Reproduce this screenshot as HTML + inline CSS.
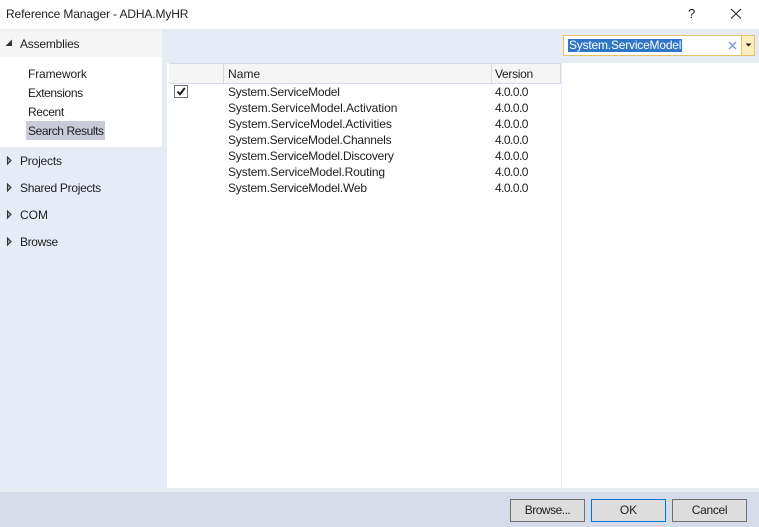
<!DOCTYPE html>
<html><head><meta charset="utf-8"><style>
html,body{margin:0;padding:0}
body{width:759px;height:527px;position:relative;overflow:hidden;background:#fff;font-family:"Liberation Sans",sans-serif;font-size:12px;color:#1e1e1e}
div,svg{position:absolute}
.t{white-space:nowrap;line-height:16px;height:16px}
.v{letter-spacing:-.55px}
.btn{background:#ddd;border:1px solid #707070;box-sizing:border-box;width:75px;height:23px;top:499px;text-align:center;line-height:21px;color:#1e1e1e}
</style></head><body>
<div style="left:0;top:29px;width:759px;height:459px;background:#e6ebf5"></div>
<div style="left:0;top:488px;width:759px;height:4px;background:#e6ebf5"></div>
<div style="left:0;top:492px;width:759px;height:35px;background:#d6dbe9"></div>
<div class="t" style="left:6px;top:6px;letter-spacing:-.13px">Reference Manager - ADHA.MyHR</div>
<svg style="left:687px;top:6px" width="10" height="14"><text x="1" y="12" font-family="Liberation Sans" font-size="13" fill="#1e1e1e">?</text></svg>
<svg style="left:730px;top:8px" width="12" height="12"><path d="M1 1L11 10.5M11 1L1 10.5" stroke="#1e1e1e" stroke-width="1" fill="none"/></svg>
<div style="left:0;top:30px;width:162px;height:27px;background:#f5f5f5"></div>
<div style="left:0;top:57px;width:162px;height:90px;background:#fff"></div>
<svg style="left:5px;top:39px" width="9" height="9"><path d="M7 .5V7H.5Z" fill="#333"/></svg>
<div class="t" style="left:20px;top:36px;letter-spacing:-.2px">Assemblies</div>
<div class="t" style="left:28px;top:66px;letter-spacing:-.14px">Framework</div>
<div class="t" style="left:28px;top:85px;letter-spacing:-.4px">Extensions</div>
<div class="t" style="left:28px;top:104px;letter-spacing:-.37px">Recent</div>
<div style="left:26px;top:121px;width:79px;height:19px;background:#c9ccd8"></div>
<div class="t" style="left:28px;top:123px;letter-spacing:-.41px">Search Results</div>
<svg style="left:6px;top:156px" width="7" height="10"><path d="M1.5 1L5 4.5L1.5 8Z" fill="#aaa" stroke="#333" stroke-width="1.1"/></svg>
<div class="t" style="left:20px;top:153px;letter-spacing:-.2px">Projects</div>
<svg style="left:6px;top:183px" width="7" height="10"><path d="M1.5 1L5 4.5L1.5 8Z" fill="#aaa" stroke="#333" stroke-width="1.1"/></svg>
<div class="t" style="left:20px;top:180px;letter-spacing:-.3px">Shared Projects</div>
<svg style="left:6px;top:210px" width="7" height="10"><path d="M1.5 1L5 4.5L1.5 8Z" fill="#aaa" stroke="#333" stroke-width="1.1"/></svg>
<div class="t" style="left:20px;top:207px;letter-spacing:0">COM</div>
<svg style="left:6px;top:237px" width="7" height="10"><path d="M1.5 1L5 4.5L1.5 8Z" fill="#aaa" stroke="#333" stroke-width="1.1"/></svg>
<div class="t" style="left:20px;top:234px;letter-spacing:-.37px">Browse</div>
<div style="left:167px;top:63px;width:592px;height:425px;background:#fff"></div>
<div style="left:561px;top:63px;width:1px;height:425px;background:#e6ebf5"></div>
<div style="left:169px;top:63px;width:392px;height:1px;background:#d6dbe9"></div>
<div style="left:169px;top:64px;width:391px;height:19px;background:#f5f5f5"></div>
<div style="left:169px;top:83px;width:392px;height:1px;background:#d6dbe9"></div>
<div style="left:223px;top:64px;width:1px;height:19px;background:#d6dbe9"></div>
<div style="left:491px;top:64px;width:1px;height:19px;background:#d6dbe9"></div>
<div style="left:560px;top:64px;width:1px;height:19px;background:#d6dbe9"></div>
<div class="t" style="left:228px;top:66px;letter-spacing:.05px">Name</div>
<div class="t" style="left:495px;top:66px;letter-spacing:-.3px">Version</div>
<div style="left:174px;top:85px;width:14px;height:13px;box-sizing:border-box;border:1px solid #707070;background:#fff"></div>
<svg style="left:174px;top:85px" width="14" height="14"><path d="M3.5 6.5L6 9.2L10.8 3" stroke="#1e1e1e" stroke-width="2" fill="none"/></svg>
<div class="t" style="left:228px;top:84px;letter-spacing:-.23px">System.ServiceModel</div>
<div class="t" style="left:228px;top:100px;letter-spacing:-.07px">System.ServiceModel.Activation</div>
<div class="t" style="left:228px;top:116px;letter-spacing:-.1px">System.ServiceModel.Activities</div>
<div class="t" style="left:228px;top:132px;letter-spacing:-.24px">System.ServiceModel.Channels</div>
<div class="t" style="left:228px;top:148px;letter-spacing:-.22px">System.ServiceModel.Discovery</div>
<div class="t" style="left:228px;top:164px;letter-spacing:-.14px">System.ServiceModel.Routing</div>
<div class="t" style="left:228px;top:180px;letter-spacing:-.22px">System.ServiceModel.Web</div>
<div class="t v" style="left:495px;top:84px">4.0.0.0</div>
<div class="t v" style="left:495px;top:100px">4.0.0.0</div>
<div class="t v" style="left:495px;top:116px">4.0.0.0</div>
<div class="t v" style="left:495px;top:132px">4.0.0.0</div>
<div class="t v" style="left:495px;top:148px">4.0.0.0</div>
<div class="t v" style="left:495px;top:164px">4.0.0.0</div>
<div class="t v" style="left:495px;top:180px">4.0.0.0</div>
<div style="left:563px;top:35px;width:179px;height:21px;box-sizing:border-box;border:1px solid #e5c365;background:#fff"></div>
<div style="left:742px;top:35px;width:13px;height:21px;box-sizing:border-box;border:1px solid #e5c365;border-left:0;background:#fdeebf"></div>
<svg style="left:745px;top:43px" width="7" height="5"><path d="M0.5 0.5H6.5L3.5 3.5Z" fill="#1e1e1e"/></svg>
<div class="t" style="left:568px;top:39px;width:114px;height:13px;line-height:13px;background:#3076c7;color:#fff;letter-spacing:-.2px;text-indent:1px">System.ServiceModel</div>
<svg style="left:728px;top:41px" width="9" height="9"><path d="M1 1L8 8M8 1L1 8" stroke="#7f9fdc" stroke-width="1.5" fill="none"/></svg>
<div class="btn" style="left:510px;letter-spacing:-.5px">Browse...</div>
<div class="btn" style="left:591px;border-color:#0078d7">OK</div>
<div class="btn" style="left:672px;letter-spacing:-.3px">Cancel</div>
</body></html>
